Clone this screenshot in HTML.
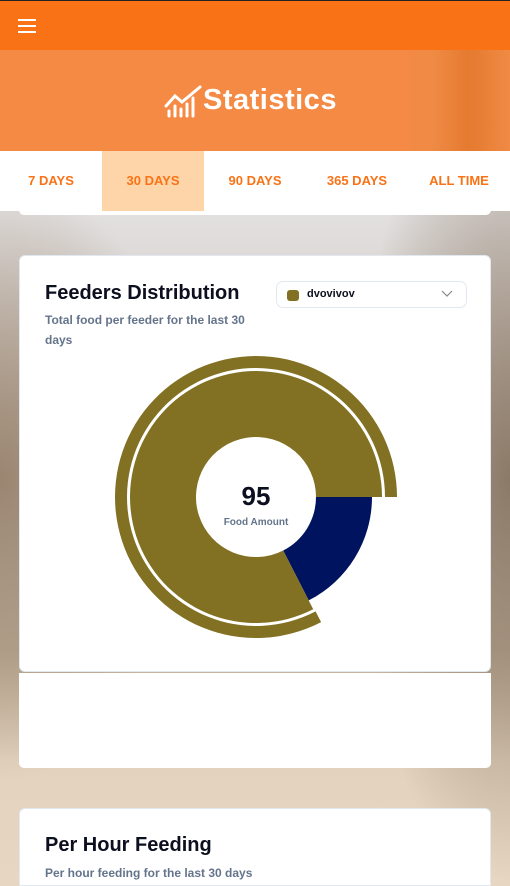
<!DOCTYPE html>
<html style="overflow:hidden;height:886px"><head><meta charset="utf-8"><style>
*{margin:0;padding:0;box-sizing:border-box}
body{width:510px;height:886px;overflow:hidden;position:relative;font-family:"Liberation Sans",sans-serif;font-weight:bold;
background:
radial-gradient(ellipse 200px 300px at 0px 480px,#9a8570 0%,rgba(154,133,112,0) 100%),
radial-gradient(ellipse 160px 400px at 510px 480px,#8c7a68 0%,rgba(140,122,104,0) 100%),
linear-gradient(#e2e0e0 211px,#cfc7c0 400px,#bfae98 650px,#e3d3be 760px,#e6d6c2 886px);}
.top{position:absolute;left:0;top:0;width:510px;height:1px;background:#222}
.bar{position:absolute;left:0;top:1px;width:510px;height:49px;background:#f97316}
.hb{position:absolute;left:18px;width:18px;height:2px;background:#fff}
.hdr{position:absolute;left:0;top:50px;width:510px;height:101px;background:linear-gradient(90deg,#f58a45 0%,#f58a45 78%,#ef8a44 85%,#e57a30 92%,#f08a44 100%)}
.title{position:absolute;left:203px;top:84px;color:#fff;font-size:29px;letter-spacing:0.5px}
.tabs{position:absolute;left:0;top:151px;width:510px;height:60px;background:#fff}
.tabcard{position:absolute;left:19px;top:205px;width:472px;height:10px;background:#fff;border-radius:0 0 5px 5px}
.tab{position:absolute;top:151px;height:60px;line-height:60px;text-align:center;color:#f97316;font-size:13px;width:102px}
.card{position:absolute;left:19px;width:472px;background:#fff;border-radius:6px;border:1px solid #e2e8f0}
h2{position:absolute;left:25px;color:#0b0f1e;font-size:20px}
.sub{position:absolute;left:25px;color:#64748b;font-size:12px;line-height:20px}
</style></head><body>
<div class="top"></div>
<div class="bar"><div class="hb" style="top:18px"></div><div class="hb" style="top:24px"></div><div class="hb" style="top:30px"></div></div>
<div class="hdr"></div>
<svg style="position:absolute;left:164px;top:84px" width="38" height="34" viewBox="0 0 38 34"><g stroke="#fff" stroke-width="3" stroke-linecap="round" fill="none"><path d="M2 22 L11 12 L18 18 L36 3"/><path d="M5 27V32M11 22V32M17 25V32M23 20V32M29 14V32"/></g></svg>
<div class="title">Statistics</div>
<div class="tabs"></div>
<div class="tabcard"></div>
<div class="tab" style="left:0">7 DAYS</div>
<div class="tab" style="left:102px;background:#fdd5a8">30 DAYS</div>
<div class="tab" style="left:204px">90 DAYS</div>
<div class="tab" style="left:306px">365 DAYS</div>
<div class="tab" style="left:408px">ALL TIME</div>

<div class="card" style="top:255px;height:417px">
<h2 style="top:26px">Feeders Distribution</h2>
<div class="sub" style="top:54px;width:220px">Total food per feeder for the last 30 days</div>
<div style="position:absolute;left:256px;top:25px;width:191px;height:27px;border:1px solid #e2e8f0;border-radius:7px">
<div style="position:absolute;left:10px;top:8px;width:12px;height:11px;border-radius:3px;background:#827023"></div>
<div style="position:absolute;left:30px;top:6px;font-size:11px;color:#0b0f1e">dvovivov</div>
<svg style="position:absolute;left:164px;top:8px" width="12" height="8"><path d="M1 1L6 6L11 1" stroke="#888" stroke-width="1.2" fill="none"/></svg>
</div>
</div>
<div style="position:absolute;left:19px;top:673px;width:472px;height:95px;background:#fff;border-radius:0 0 5px 5px"></div>
<svg style="position:absolute;left:0;top:0" width="510" height="700">
<path d="M316,497 L372,497 A116,116 0 0 1 308.7,600.4 L283.2,550.5 A60,60 0 0 0 316,497 Z" fill="#00135e"/>
<path d="M313.2,609.3 A126,126 0 1 1 382,497 L316,497 A60,60 0 1 0 283.2,550.5 Z" fill="#827023"/>
<path d="M321.1,622.1 A141,141 0 1 1 397,497 L385,497 A129,129 0 1 0 315.6,611.4 Z" fill="#827023"/>
<text x="256" y="505" text-anchor="middle" font-family="Liberation Sans" font-weight="bold" font-size="26" fill="#0b0f1e">95</text>
<text x="256" y="525" text-anchor="middle" font-family="Liberation Sans" font-weight="bold" font-size="10" fill="#64748b">Food Amount</text>
</svg>

<div class="card" style="top:808px;height:78px;border-radius:6px 6px 0 0">
<h2 style="top:25px">Per Hour Feeding</h2>
<div class="sub" style="top:54px">Per hour feeding for the last 30 days</div>
</div>
</body></html>
